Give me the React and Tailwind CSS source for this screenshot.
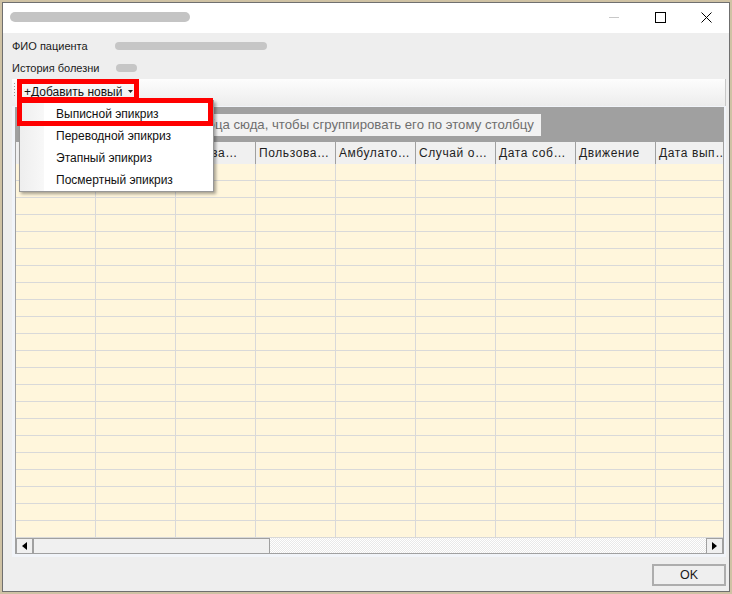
// App.jsx — "Эпикризы" dialog with the add-new dropdown open

const font = { fontFamily: '"Liberation Sans", Arial, sans-serif' }

// header captions as the grid shows them (clipped by column width)
const columns = ['', '', 'Дата за…', 'Пользова…', 'Амбулато…', 'Случай о…', 'Дата соб…', 'Движение', 'Дата вып…']
const menuItems = ['Выписной эпикриз', 'Переводной эпикриз', 'Этапный эпикриз', 'Посмертный эпикриз']
const rows = Array.from({ length: 22 })

function TitleBar() {
  return (
    <div className="h-[30px] bg-white flex shrink-0">
      {/* blurred window title */}
      <div className="ml-[7px] mt-[9px] w-[180px] h-[10px] rounded-full bg-[#c4c4c4]" />
      <div className="ml-auto flex">
        <div className="w-[46px] h-[30px] flex items-center justify-center">
          <div className="w-[10px] h-px bg-[#c8c8c8] mt-[-2px]" />
        </div>
        <div className="w-[46px] h-[30px] flex items-center justify-center">
          <div className="w-[11px] h-[11px] border border-black mt-[-2px]" />
        </div>
        <div className="w-[46px] h-[30px] flex items-center justify-center">
          <svg width="11" height="11" viewBox="0 0 11 11" className="mt-[-2px]">
            <path d="M0.5 0.5 L10.5 10.5 M10.5 0.5 L0.5 10.5" stroke="black" strokeWidth="1" />
          </svg>
        </div>
      </div>
    </div>
  )
}

function Grid() {
  return (
    <div className="h-[451px] shrink-0 bg-[#f1f4f9] pt-px pl-[3px] pr-[2px] pb-[3px]">
      <div className="h-full border-x border-[#a0a0a0] flex flex-col overflow-hidden">

        {/* group-by panel */}
        <div className="h-[35px] shrink-0 bg-[#a0a0a0] flex items-start pt-[7px] pl-[14px]">
          <div className="h-[22px] bg-[#f2f2f2] px-[7px] flex items-center text-[13.2px] text-[#6e6e6e] whitespace-nowrap">
            Перетащите заголовок столбца сюда, чтобы сгруппировать его по этому столбцу
          </div>
        </div>

        {/* header */}
        <div className="h-[22px] shrink-0 flex bg-[#f0f0f0]">
          {columns.map((c, i) => (
            <div key={i} className="w-[80px] shrink-0 border-r border-[#a0a0a0] px-[3px] flex items-center text-[12px] tracking-[0.6px] text-[#1e1e1e] whitespace-nowrap overflow-hidden">
              {c}
            </div>
          ))}
        </div>

        {/* rows */}
        <div className="shrink-0">
          {rows.map((_, i) => (
            <div key={i} className="h-[17px] flex border-b border-[#d9d9d9] bg-[#fff6dc]">
              {columns.map((_, j) => (
                <div key={j} className="w-[80px] shrink-0 border-r border-[#d9d9d9]" />
              ))}
            </div>
          ))}
        </div>

        {/* horizontal scrollbar */}
        <div className="h-[16px] shrink-0 flex">
          <div className="w-[17px] shrink-0 border border-[#a0a0a0] bg-[#f0f0f0] flex items-center justify-center">
            <svg width="5" height="8" viewBox="0 0 5 8"><path d="M5 0 L0 4 L5 8 Z" fill="black" /></svg>
          </div>
          <div className="w-[237px] shrink-0 border border-[#a0a0a0] bg-[#f0f0f0]" />
          <div className="flex-1 border-b border-[#a0a0a0] bg-[repeating-conic-gradient(#e9e9e9_0%_25%,#ffffff_0%_50%)] bg-[length:2px_2px]" />
          <div className="w-[17px] shrink-0 border border-[#a0a0a0] bg-[#f0f0f0] flex items-center justify-center">
            <svg width="5" height="8" viewBox="0 0 5 8"><path d="M0 0 L5 4 L0 8 Z" fill="black" /></svg>
          </div>
        </div>
      </div>
    </div>
  )
}

export default function App() {
  return (
    <div className="relative w-[732px] h-[594px] overflow-hidden bg-[#cfc2a4] pl-[2px] pt-[2px]" style={font}>
      <div className="w-[728px] h-[590px] border border-[#6f6f6f] bg-[#eeeeee] flex flex-col">
        <TitleBar />

        <div className="flex-1 flex flex-col pl-[9px] pr-[3px] pt-[2px]">
          {/* patient fields */}
          <div className="h-[22px] shrink-0 flex items-center">
            <span className="w-[103px] text-[11px] text-[#1a1a1a]">ФИО пациента</span>
            <div className="w-[152px] h-[8px] rounded-full bg-[#c6c6c6]" />
          </div>
          <div className="h-[22px] shrink-0 flex items-center">
            <span className="w-[104px] text-[11px] text-[#1a1a1a]">История болезни</span>
            <div className="w-[21px] h-[8px] rounded-full bg-[#c6c6c6]" />
          </div>

          {/* toolbar */}
          <div className="h-[27px] shrink-0 flex items-center bg-gradient-to-b from-[#fdfdfd] to-[#ececec] border-r border-[#c8c8c8]">
            <div className="ml-[2px] flex flex-col gap-[2px] self-start mt-[4px]">
              {[0, 1, 2, 3, 4].map(i => <div key={i} className="w-px h-px bg-[#9a9a9a]" />)}
            </div>
            <div className="ml-[9px] mt-[-2px] flex items-center gap-[6px] text-[12px] text-[#111]">
              <span>+Добавить новый</span>
              <svg width="5" height="3" viewBox="0 0 5 3"><path d="M0 0 L5 0 L2.5 3 Z" fill="#222" /></svg>
            </div>
          </div>

          <Grid />

          {/* footer */}
          <div className="flex-1 flex justify-end items-start pt-[7px]">
            <button className="w-[74px] h-[22px] border-2 border-[#adadad] bg-[#efefef] text-[12.5px] text-[#1a1a1a]">
              OK
            </button>
          </div>
        </div>
      </div>

      {/* dropdown menu */}
      <div className="absolute left-[19px] top-[100px] w-[195px] h-[92px] bg-white border border-[#979797] shadow-[2px_2px_3px_rgba(0,0,0,0.35)]">
        <div className="absolute left-0 top-0 bottom-0 w-[24px] bg-gradient-to-r from-[#eeeeee] to-[#f8f8f8]" />
        <div className="relative pt-[2px]">
          {menuItems.map(m => (
            <div key={m} className="h-[22px] pl-[36px] flex items-center text-[12px] text-[#111]">{m}</div>
          ))}
        </div>
      </div>

      {/* red annotation frames */}
      <div className="absolute left-[17px] top-[79px] w-[122px] h-[23px] border-[5px] border-[#ff0000]" />
      <div className="absolute left-[17px] top-[98px] w-[196px] h-[28px] border-[5px] border-[#ff0000]" />
    </div>
  )
}
